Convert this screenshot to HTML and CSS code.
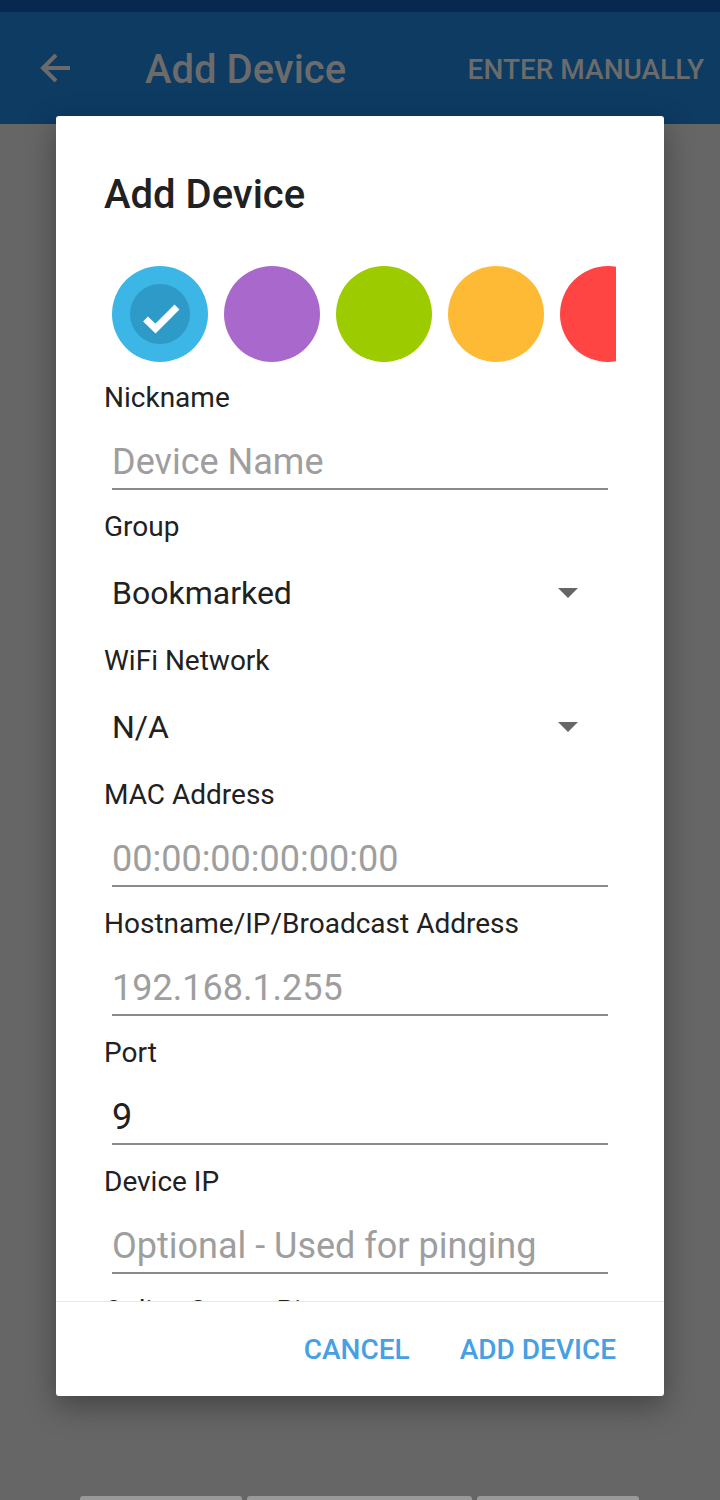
FILE: index.html
```html
<!DOCTYPE html>
<html>
<head>
<meta charset="utf-8">
<link rel="stylesheet" href="styles.css">
</head>
<body>
<div class="page">
  <div class="statusbar"></div>
  <div class="appbar">
    <svg class="back" width="32" height="32" viewBox="0 0 32 32"><path d="M30 16H4M16 3L3 16l13 13" fill="none" stroke="#6b6b6b" stroke-width="4"/></svg>
    <div class="apptitle">Add Device</div>
    <div class="appaction">ENTER MANUALLY</div>
  </div>
  <div class="spacer"></div>
  <div class="bottombars">
    <div class="bar b1"></div>
    <div class="bar b2"></div>
    <div class="bar b3"></div>
  </div>
</div>

<div class="dialog">
  <div class="dtitle">Add Device</div>
  <div class="scroll">
    <div class="colors">
      <div class="swatch blue">
        <div class="inner">
          <svg width="60" height="60" viewBox="0 0 60 60"><path d="M15.5 35l10 9.5L47 23" fill="none" stroke="#fff" stroke-width="7"/></svg>
        </div>
      </div>
      <div class="swatch purple"></div>
      <div class="swatch green"></div>
      <div class="swatch orange"></div>
      <div class="swatch red"></div>
    </div>

    <div class="field">
      <div class="label">Nickname</div>
      <div class="input placeholder">Device Name</div>
    </div>
    <div class="field">
      <div class="label">Group</div>
      <div class="spinner"><span>Bookmarked</span><span class="caret"></span></div>
    </div>
    <div class="field">
      <div class="label">WiFi Network</div>
      <div class="spinner"><span>N/A</span><span class="caret"></span></div>
    </div>
    <div class="field">
      <div class="label">MAC Address</div>
      <div class="input placeholder">00:00:00:00:00:00</div>
    </div>
    <div class="field">
      <div class="label">Hostname/IP/Broadcast Address</div>
      <div class="input placeholder">192.168.1.255</div>
    </div>
    <div class="field">
      <div class="label">Port</div>
      <div class="input">9</div>
    </div>
    <div class="field">
      <div class="label">Device IP</div>
      <div class="input placeholder">Optional - Used for pinging</div>
    </div>
    <div class="field">
      <div class="label">Online Status Ping</div>
    </div>
  </div>
  <div class="buttons">
    <div class="btn">CANCEL</div>
    <div class="btn">ADD DEVICE</div>
  </div>
</div>
</body>
</html>
```
FILE: styles.css
```css
html, body {
  margin: 0;
  padding: 0;
}
body {
  width: 720px;
  height: 1500px;
  overflow: hidden;
  background: #666666;
  font-family: Roboto, "Noto Sans", sans-serif;
  position: relative;
}
.page {
  height: 1500px;
  display: flex;
  flex-direction: column;
}
.statusbar {
  height: 12px;
  background: #082850;
}
.appbar {
  height: 112px;
  background: #0d3b62;
  display: flex;
  align-items: center;
  padding: 0 16px 0 40px;
}
.back {
  display: block;
  margin-top: 0;
}
.apptitle {
  margin-left: 73px;
  font-size: 40px;
  font-weight: 500;
  color: #6b6b6b;
  flex: 1;
  padding-top: 2px;
}
.appaction {
  font-size: 28px;
  font-weight: 500;
  color: #6b6b6b;
  padding-top: 2px;
}
.spacer {
  flex: 1;
}
.bottombars {
  height: 4px;
  display: flex;
  gap: 5px;
  padding-left: 80px;
}
.bar {
  background: #999999;
  border-radius: 3px 3px 0 0;
}
.b1 { width: 162px; }
.b2 { width: 225px; }
.b3 { width: 162px; }

.dialog {
  position: absolute;
  top: 116px;
  left: 56px;
  width: 608px;
  height: 1280px;
  background: #ffffff;
  border-radius: 3px;
  box-shadow: 0 10px 30px rgba(0, 0, 0, 0.35);
  display: flex;
  flex-direction: column;
  overflow: hidden;
}
.dtitle {
  padding: 55px 48px 0;
  font-size: 40px;
  line-height: 48px;
  font-weight: 500;
  color: #212121;
}
.scroll {
  flex: 1;
  overflow: hidden;
  padding: 0 48px;
}
.colors {
  margin-top: 47px;
  height: 96px;
  display: flex;
  gap: 16px;
  padding-left: 8px;
  overflow: hidden;
}
.swatch {
  flex: 0 0 96px;
  width: 96px;
  height: 96px;
  border-radius: 50%;
  display: flex;
  align-items: center;
  justify-content: center;
}
.blue { background: #3bb6e6; }
.purple { background: #a968cc; }
.green { background: #9ccc00; }
.orange { background: #ffba35; }
.red { background: #ff4444; }
.inner {
  width: 60px;
  height: 60px;
  border-radius: 50%;
  background: #2e9ac7;
}
.inner svg {
  display: block;
}
.colors + .field {
  margin-top: 18px;
}
.label {
  font-size: 28px;
  line-height: 36px;
  color: #212121;
}
.input {
  margin: 20px 8px 19px;
  height: 52px;
  line-height: 52px;
  font-size: 36px;
  color: #212121;
  border-bottom: 2px solid #8a8a8a;
  white-space: nowrap;
}
.input.placeholder {
  color: #9e9e9e;
}
.spinner {
  height: 56px;
  padding: 20px 38px 22px 8px;
  display: flex;
  align-items: center;
  justify-content: space-between;
  font-size: 32px;
  color: #212121;
}
.caret {
  width: 0;
  height: 0;
  border-left: 10px solid transparent;
  border-right: 10px solid transparent;
  border-top: 10px solid #666666;
}
.buttons {
  height: 94px;
  border-top: 1px solid #e8e8e8;
  display: flex;
  align-items: center;
  justify-content: flex-end;
  gap: 50px;
  padding-right: 48px;
}
.btn {
  font-size: 28px;
  font-weight: 500;
  color: #47a0e4;
}
```
